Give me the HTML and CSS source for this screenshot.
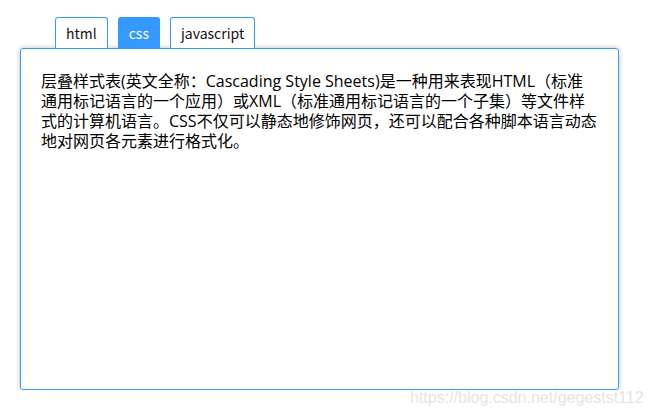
FILE: index.html
```html
<!DOCTYPE html>
<html lang="zh">
<head>
<meta charset="utf-8">
<link rel="stylesheet" href="styles.css">
</head>
<body>
<div class="wrap">
  <ul class="tabs">
    <li class="tab">html</li>
    <li class="tab active">css</li>
    <li class="tab">javascript</li>
  </ul>
  <div class="panel">
    <p>层叠样式表(英文全称：Cascading Style Sheets)是一种用来表现HTML（标准通用标记语言的一个应用）或XML（标准通用标记语言的一个子集）等文件样式的计算机语言。CSS不仅可以静态地修饰网页，还可以配合各种脚本语言动态地对网页各元素进行格式化。</p>
  </div>
</div>
<div class="watermark">https://blog.csdn.net/gegestst112</div>
</body>
</html>
```
FILE: styles.css
```css
html, body {
  margin: 0;
  padding: 0;
  background: #fff;
}
body {
  font-family: "Noto Sans CJK SC", "Microsoft YaHei", sans-serif;
  font-size: 14px;
  color: #111;
}
.wrap {
  padding: 17px 31px 0 20px;
}
.tabs {
  list-style: none;
  margin: 0 0 0 35px;
  padding: 0;
  display: flex;
  gap: 10px;
  height: 31px;
}
.tab {
  box-sizing: border-box;
  height: 31px;
  padding: 0 10px;
  border: 1px solid #3399ff;
  border-bottom: none;
  border-radius: 3px 3px 0 0;
  line-height: 30px;
  color: #111;
  background: #fff;
}
.tab.active {
  background: #3399ff;
  color: #fff;
}
.panel {
  box-sizing: border-box;
  height: 342px;
  border: 1px solid #3399ff;
  border-radius: 3px;
  padding: 22px 20px 20px;
  box-shadow: 0 0 5px rgba(0,0,0,0.25);
}
.panel p {
  margin: 0;
  font-family: "Open Sans", "Noto Sans CJK SC", sans-serif;
  font-size: 16px;
  line-height: 20px;
  color: #000;
}
.watermark {
  position: absolute;
  left: 410px;
  top: 389px;
  font-family: "Liberation Sans", Arial, sans-serif;
  font-size: 16px;
  color: #e4e4e4;
}
```
